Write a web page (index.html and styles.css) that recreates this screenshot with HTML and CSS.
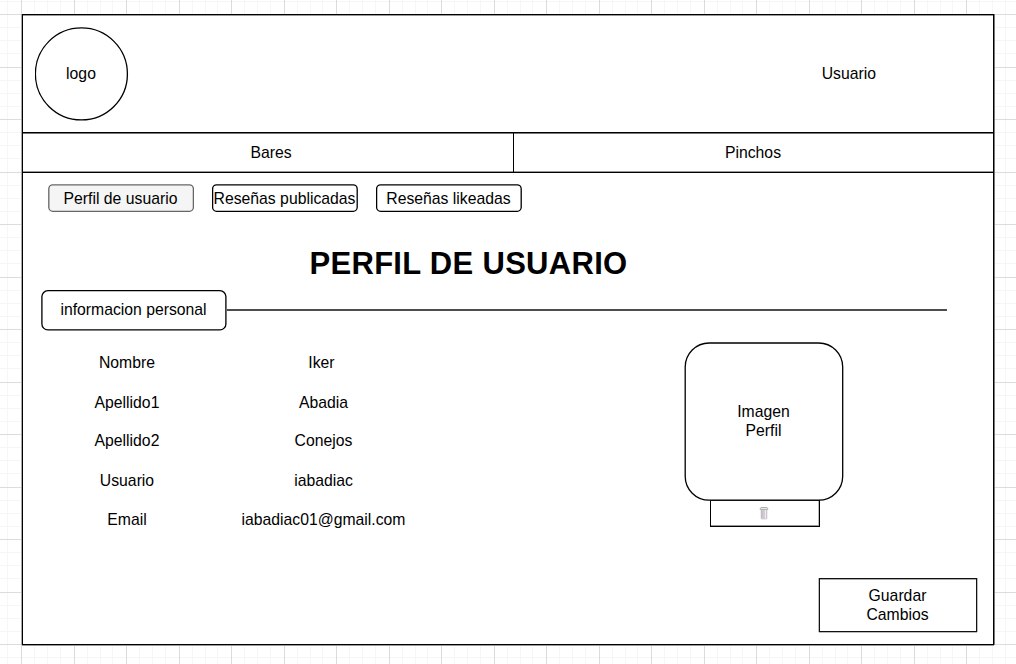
FILE: index.html
```
<!DOCTYPE html>
<html lang="es">
<head>
<meta charset="utf-8">
<title>Perfil de usuario</title>
<link rel="stylesheet" href="styles.css">
</head>
<body>
<main class="frame">
  <header class="header">
    <div class="logo"><svg class="outline" width="94" height="94"><circle cx="46.4" cy="46.9" r="46"/></svg><span>logo</span></div>
    <span class="account">Usuario</span>
  </header>
  <nav class="nav"><a class="nav-item">Bares</a><a class="nav-item">Pinchos</a></nav>
  <section class="content">
    <div class="tabs">
      <a class="tab tab-active"><svg class="outline" width="146" height="28"><rect x=".8" y=".9" width="144.6" height="26.4" rx="4"/></svg><span>Perfil de usuario</span></a>
      <a class="tab"><svg class="outline" width="146" height="28"><rect x=".6" y=".9" width="144.6" height="26.4" rx="4"/></svg><span>Reseñas publicadas</span></a>
      <a class="tab"><svg class="outline" width="146" height="28"><rect x=".6" y=".9" width="144.6" height="26.4" rx="4"/></svg><span>Reseñas likeadas</span></a>
    </div>
    <h1 class="title">PERFIL DE USUARIO</h1>
    <div class="section-head">
      <div class="section-label"><svg class="outline" width="186" height="41"><rect x=".9" y=".7" width="184" height="39.2" rx="6"/></svg><span>informacion personal</span></div>
      <div class="rule"></div>
    </div>
    <div class="profile">
      <dl class="fields">
        <dt>Nombre</dt><dd class="first-name">Iker</dd>
        <dt>Apellido1</dt><dd>Abadia</dd>
        <dt>Apellido2</dt><dd>Conejos</dd>
        <dt>Usuario</dt><dd>iabadiac</dd>
        <dt>Email</dt><dd>iabadiac01@gmail.com</dd>
      </dl>
      <div class="photo-column">
        <div class="photo"><svg class="outline" width="160" height="159"><rect x="1.2" y="1" width="157.5" height="157.2" rx="24"/></svg><span>Imagen<br>Perfil</span></div>
        <button class="delete" aria-label="Eliminar">
          <svg class="trash" width="10" height="14" viewBox="0 0 10 14">
            <path d="M1.8 3.5h6.4v9.3H2.2z" fill="#eeecf1"/>
            <path d="M2.3 4v8.6M5 4v8.6" stroke="#aaa8c4" stroke-width=".9"/>
            <path d="M3.7 4v8.6M7.7 4v8.6" stroke="#c4b2b6" stroke-width=".9"/>
            <path d="M1.2 3.4V2.3l1-.8h5.6l1 .8v1.1z" fill="#eee" stroke="#999" stroke-width=".8"/>
            <path d="M2.2 12.9h5.6" stroke="#bbb" stroke-width=".7"/>
          </svg>
        </button>
      </div>
    </div>
    <button class="save">Guardar<br>Cambios</button>
  </section>
</main>
</body>
</html>
```
FILE: styles.css
```
* { box-sizing: border-box; }
body {
  margin: 0;
  height: 664px;
  padding: 14px 21px 0 22px;
  overflow: hidden;
  color: #000;
  font: 15.75px/19px "Liberation Sans", Arial, sans-serif;
  background-color: #fff;
  background-image:
    linear-gradient(90deg, #dcdcdc 1px, transparent 1px 53px, #dcdcdc 53px 54px, transparent 54px),
    linear-gradient(#dcdcdc 1px, transparent 1px 53px, #dcdcdc 53px 54px, transparent 54px),
    linear-gradient(90deg, transparent 13px, #f6f6f6 13px 14px, transparent 14px 26px, #f6f6f6 26px 27px, transparent 27px 39px, #f6f6f6 39px 40px, transparent 40px 66px, #f6f6f6 66px 67px, transparent 67px 79px, #f6f6f6 79px 80px, transparent 80px 91px, #f6f6f6 91px 92px, transparent 92px),
    linear-gradient(transparent 13px, #f6f6f6 13px 14px, transparent 14px 26px, #f6f6f6 26px 27px, transparent 27px 39px, #f6f6f6 39px 40px, transparent 40px 66px, #f6f6f6 66px 67px, transparent 67px 79px, #f6f6f6 79px 80px, transparent 80px 92px, #f6f6f6 92px 93px, transparent 93px);
  background-size: 105px 105px;
  background-position: 21px 14px;
}
.frame {
  width: 972px;
  height: 631px;
  border: 1px solid #000;
  background: #fff;
  box-shadow: -1px 0 #aaa, 1px 0 #777, 0 1px #999, inset 0 1px #999;
}
.header {
  height: 118px;
  padding: 12px 117px 0 12px;
  display: flex;
  justify-content: space-between;
  border-bottom: 1px solid #000;
  box-shadow: 0 1px #777;
}
.logo, .tab, .section-label, .photo {
  position: relative;
  display: flex;
  align-items: center;
  justify-content: center;
  text-align: center;
}
.logo span, .tab span, .section-label span, .photo span { position: relative; white-space: nowrap; }
.outline {
  position: absolute;
  inset: 0;
  fill: #fff;
  stroke: #000;
  stroke-width: 1.31;
}
.logo { width: 92px; height: 93px; }
.account { margin-top: 37px; }
.nav {
  height: 40px;
  display: grid;
  grid-template-columns: 490px 1fr;
  border-bottom: 1px solid #000;
  box-shadow: inset 0 -1px #999;
}
.nav-item { text-align: center; padding-top: 10px; padding-left: 6px; }
.nav-item + .nav-item { border-left: 1px solid #000; padding: 10px 1px 0 0; }
.tabs { display: flex; gap: 18px; padding: 11px 0 0 25px; }
.tab { width: 146px; height: 28px; padding-right: 1px; }
.tab-active .outline { fill: #f5f5f5; stroke: #666; }
.title {
  margin: 33px 0 0 19px;
  width: 853px;
  text-align: center;
  font-size: 31px;
  letter-spacing: .3px;
  line-height: 38px;
}
.section-head { display: flex; margin: 7px 0 0 18px; }
.section-label { width: 186px; height: 40px; padding: 0 1px 2px 0; }
.rule { width: 720px; height: 2px; margin-top: 19px; background: #4d4d4d; }
.profile { display: flex; justify-content: space-between; padding: 12px 149px 0 49px; }
.fields {
  margin: 11px 0 0;
  display: grid;
  grid-template-columns: 110px 283px;
  grid-template-rows: 40px 38px 40px 39px 20px;
  text-align: center;
}
.fields dd { margin: 0; }
.fields .first-name { padding-right: 4px; }
.photo-column { display: flex; flex-direction: column; align-items: center; width: 160px; }
.photo { width: 160px; height: 158px; padding-right: 1px; }
button { font: inherit; color: inherit; background: #fff; border-radius: 0; padding: 0; }
.delete {
  width: 110px;
  height: 27px;
  margin-left: 2px;
  border: 1px solid #000;
  box-shadow: inset 0 -1px #999, inset -1px 0 #bbb;
  display: flex;
  align-items: center;
  justify-content: center;
  padding: 0 2px 2px 0;
}
.save {
  display: block;
  width: 158px;
  height: 54px;
  margin: 48px 0 0 796px;
  padding-right: 1px;
  border: 1px solid #111;
  box-shadow: -1px 0 #bbb, 0 1px #bbb, 1px 0 #bbb, inset 0 1px #aaa;
}
```
